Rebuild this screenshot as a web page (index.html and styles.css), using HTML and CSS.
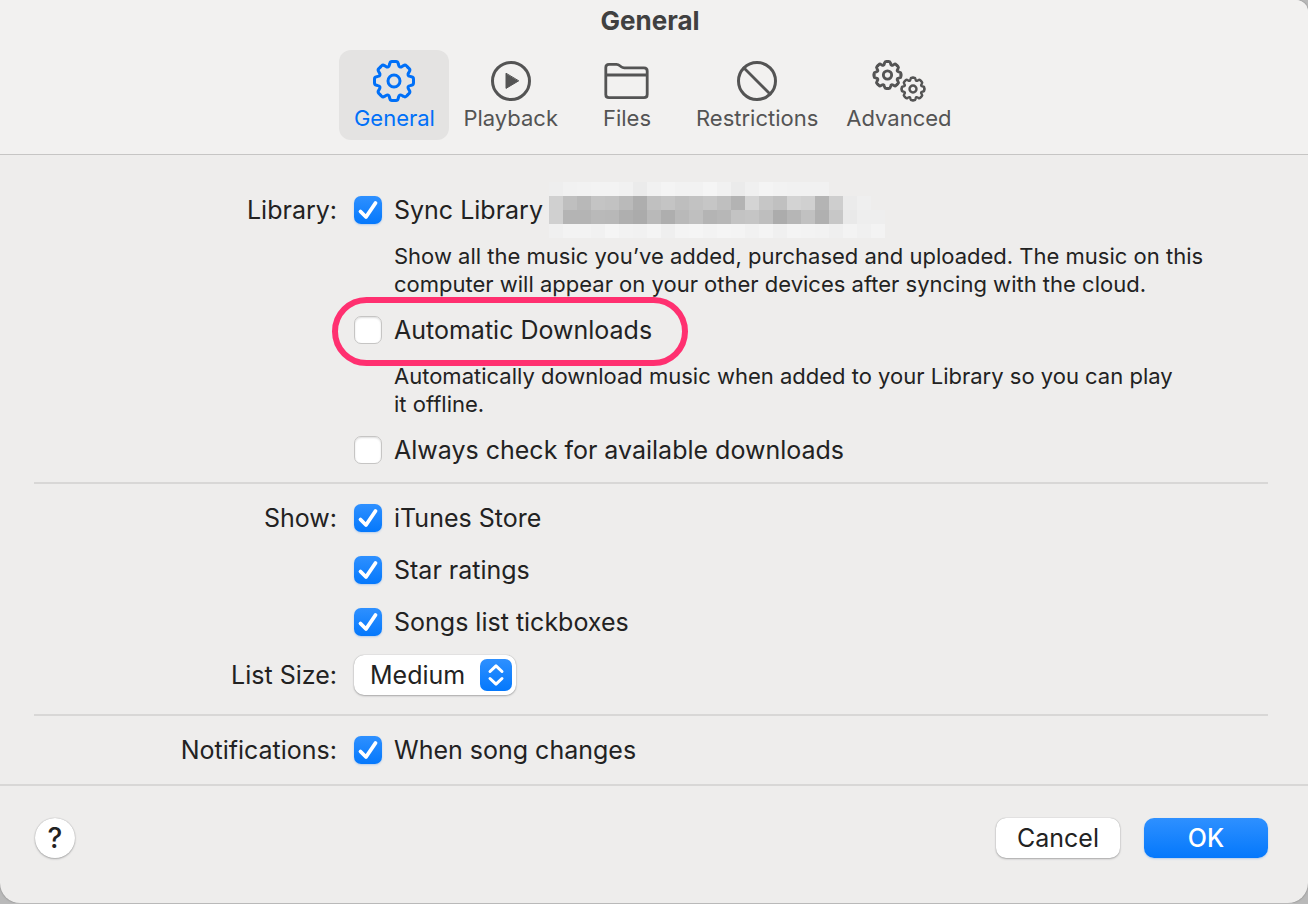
FILE: index.html
```
<!DOCTYPE html>
<html lang="en">
<head>
  <meta charset="utf-8">
  <title>General</title>
  <link rel="stylesheet" href="styles.css">
</head>
<body>
  <!-- one eighth of a gear, repeated around the centre -->
  <svg class="defs" width="0" height="0" aria-hidden="true">
    <defs>
      <path id="tooth" d="M0,-19.5H2Q3.8,-19.5 4.2,-17.5L4.6,-16C5,-14 6.36,-13.44 8.06,-14.57L9.4,-15.34Q11.1,-16.48 12.37,-15.2L13.79,-13.79"/>
      <g id="gear">
        <use href="#tooth"/>
        <use href="#tooth" transform="rotate(45)"/>
        <use href="#tooth" transform="rotate(90)"/>
        <use href="#tooth" transform="rotate(135)"/>
        <use href="#tooth" transform="rotate(180)"/>
        <use href="#tooth" transform="rotate(225)"/>
        <use href="#tooth" transform="rotate(270)"/>
        <use href="#tooth" transform="rotate(315)"/>
        <circle r="6"/>
      </g>
    </defs>
  </svg>

  <form class="window" onsubmit="return false">
    <header class="header">
      <h1>General</h1>
      <nav class="tabs">
        <button type="button" class="tab active">
          <svg width="46" height="46" viewBox="-23 -23 46 46"><use href="#gear" stroke-width="3"/></svg>
          General
        </button>
        <button type="button" class="tab">
          <svg width="46" height="46" viewBox="-23 -23 46 46"><circle r="18.5" stroke-width="3"/><path d="M-5,-7.4V7.4L7.4,0Z" fill="currentColor" stroke-width="1"/></svg>
          Playback
        </button>
        <button type="button" class="tab">
          <svg width="46" height="46" viewBox="0 0 46 46"><path stroke-width="2.8" d="M1.8,37V9.5Q1.8,6.3 5,6.3H12.5Q14.3,6.3 15.5,7.5L17.5,9Q18.5,9.8 20.3,9.8H40Q43.2,9.8 43.2,13V36.5Q43.2,39.7 40,39.7H5Q1.8,39.7 1.8,36.5ZM1.8,17H43.2"/></svg>
          Files
        </button>
        <button type="button" class="tab">
          <svg width="46" height="46" viewBox="-23 -23 46 46"><circle r="18.5" stroke-width="3"/><path stroke-width="2.8" d="M-13,-13L13,13"/></svg>
          Restrictions
        </button>
        <button type="button" class="tab">
          <svg width="56" height="46" viewBox="-28 -23 56 46">
            <use href="#gear" stroke-width="4.2" transform="translate(-11.5,-6) scale(.69)"/>
            <use href="#gear" stroke-width="4.2" transform="translate(14,8) scale(.58)"/>
          </svg>
          Advanced
        </button>
      </nav>
    </header>

    <main class="settings">
      <section class="group">
        <span class="caption">Library:</span>
        <div class="options">
          <label class="check"><input type="checkbox" checked>Sync Library<svg class="redacted" id="redacted" width="336" height="56" shape-rendering="crispEdges"></svg></label>
          <p>Show all the music you’ve added, purchased and uploaded. The music on this<br>computer will appear on your other devices after syncing with the cloud.</p>
          <label class="check marked"><input type="checkbox">Automatic Downloads</label>
          <p>Automatically download music when added to your Library so you can play<br>it offline.</p>
          <label class="check"><input type="checkbox">Always check for available downloads</label>
        </div>
      </section>

      <section class="group display">
        <span class="caption">Show:</span>
        <div class="options">
          <label class="check"><input type="checkbox" checked>iTunes Store</label>
          <label class="check"><input type="checkbox" checked>Star ratings</label>
          <label class="check"><input type="checkbox" checked>Songs list tickboxes</label>
        </div>
        <label class="caption" for="listSize">List Size:</label>
        <div class="select">
          <select id="listSize">
            <option>Small</option>
            <option selected>Medium</option>
            <option>Large</option>
          </select>
          <svg width="32" height="32" viewBox="0 0 32 32"><path d="M10,12.5L16,6.8L22,12.5M10,19.5L16,25.2L22,19.5"/></svg>
        </div>
      </section>

      <section class="group">
        <span class="caption">Notifications:</span>
        <div class="options">
          <label class="check"><input type="checkbox" checked>When song changes</label>
        </div>
      </section>
    </main>

    <footer class="footer">
      <button type="button" class="help" aria-label="Help">?</button>
      <button type="button" class="button">Cancel</button>
      <button type="submit" class="button primary">OK</button>
    </footer>
  </form>

  <script>
    // grey level of each block, row by row
    const rows = [
      'ee f1 f2 f3 f3 f1 eb f1 f4 f2 f2 f5 f1 eb f0 f4 f2 f1 f1 f1',
      'd0 bf b8 c4 c2 ba ae c0 c4 be c2 c6 bf b3 d4 c6 c0 d3 d0 b4 ce eb ef',
      'd0 b4 b4 b9 b8 af ab b9 ae b9 bf b4 b7 c3 c5 be ac b6 c1 b0 c7 e9 ee ee',
      'f0 f3 f3 f1 f5 f2 f1 f4 ef f4 f5 f3 f5 f4 f1 f4 f0 f4 f3 f2 ef f3 f0 f3'
    ];
    let blocks = '';
    rows.forEach((row, y) => {
      row.split(' ').forEach((grey, x) => {
        blocks += `<rect x="${x * 14}" y="${y * 14}" width="14" height="14" fill="#${grey.repeat(3)}"/>`;
      });
    });
    document.getElementById('redacted').innerHTML = blocks;
  </script>
</body>
</html>
```
FILE: styles.css
```
* {
  box-sizing: border-box;
}

body {
  margin: 0;
  background: #b9b9b9;
  color: #222;
  font-family: Inter, "Liberation Sans", sans-serif;
  font-size: 25px;
  line-height: 40px;
}

button, select, input {
  margin: 0;
  font: inherit;
  color: inherit;
}

.defs {
  position: absolute;
}

.window {
  background: #eeedec;
  border-radius: 0 12px 20px 20px;
  overflow: hidden;
  box-shadow: 0 0 2px #777;
}

.header {
  padding: 7px 0 14px;
  background: #f2f1f0;
  border-bottom: 1px solid #c6c5c4;
}

h1 {
  margin: 0 8px 15px 0;
  padding: 0;
  color: #404040;
  font-size: 26px;
  font-weight: 700;
  line-height: 28px;
  text-align: center;
}

.tabs {
  display: flex;
  justify-content: center;
  margin-right: 3px;
}

.tab {
  display: flex;
  flex-direction: column;
  align-items: center;
  min-width: 110px;
  padding: 8px 14px;
  border: none;
  border-radius: 12px;
  background: none;
  color: #545454;
  font-size: 22px;
  line-height: 28px;
}

.tab.active {
  background: #e4e3e2;
  color: #0070f8;
}

.tab svg {
  fill: none;
  stroke: currentColor;
  stroke-linecap: round;
  stroke-linejoin: round;
}

.settings {
  padding: 23px 40px 0 34px;
}

.group {
  display: grid;
  grid-template-columns: 303px 1fr;
  gap: 13px 17px;
  padding: 12px 0;
}

.group + .group {
  padding: 14px 0;
  border-top: 2px solid #d8d7d6;
}

.group.display {
  padding-bottom: 19px;
}

.caption {
  text-align: right;
}

.options {
  display: flex;
  flex-direction: column;
  align-items: flex-start;
  gap: 12px;
}

.options p {
  margin: 0 0 0 40px;
  font-size: 22px;
  line-height: 28px;
}

.check {
  display: flex;
  align-items: center;
  position: relative;
}

.check input {
  appearance: none;
  width: 28px;
  height: 28px;
  margin-right: 12px;
  border: 1px solid #c6c5c4;
  border-radius: 7px;
  background: #fff;
  box-shadow: inset 0 1px 2px #ddd;
}

.check input:checked {
  border: none;
  background: url("data:image/svg+xml,%3Csvg xmlns='http://www.w3.org/2000/svg' viewBox='0 0 28 28'%3E%3Cpath d='M6.5 15.5L12 21L21.5 7' fill='none' stroke='white' stroke-width='3.8' stroke-linecap='round' stroke-linejoin='round'/%3E%3C/svg%3E"), linear-gradient(#2e90ff, #0478fc);
  box-shadow: 0 1px 2px #b4cdec;
}

/* highlight ring around an option */
.marked::after {
  content: "";
  position: absolute;
  inset: -13px -36px -16px -22px;
  border: 6px solid #ff3070;
  border-radius: 35px;
  pointer-events: none;
}

.redacted {
  margin: -8px 0 -8px 6px;
}

.select {
  position: relative;
  justify-self: start;
}

.select select {
  display: block;
  appearance: none;
  width: 162px;
  height: 40px;
  padding: 0 40px 0 16px;
  border: none;
  border-radius: 10px;
  background: #fff;
  box-shadow: 0 0 1px #999, 0 1px 2px #aaa;
}

.select svg {
  position: absolute;
  top: 4px;
  right: 4px;
  border-radius: 7px;
  background: linear-gradient(#2e90ff, #0478fc);
  fill: none;
  stroke: #fff;
  stroke-width: 3;
  stroke-linecap: round;
  stroke-linejoin: round;
  pointer-events: none;
}

.footer {
  display: flex;
  gap: 24px;
  padding: 32px 40px 45px 35px;
  border-top: 2px solid #d8d7d6;
}

.button, .help {
  height: 40px;
  padding: 0;
  border: none;
  background: #fff;
  box-shadow: 0 0 1px #999, 0 1px 2px #aaa;
}

.button {
  width: 124px;
  border-radius: 10px;
}

.help {
  width: 40px;
  margin-right: auto;
  border-radius: 50%;
  font-size: 28px;
  font-weight: 500;
}

.primary {
  background: linear-gradient(#2e90ff, #0478fc);
  box-shadow: 0 1px 2px #b4cdec;
  color: #fff;
  font-weight: 500;
}
```
